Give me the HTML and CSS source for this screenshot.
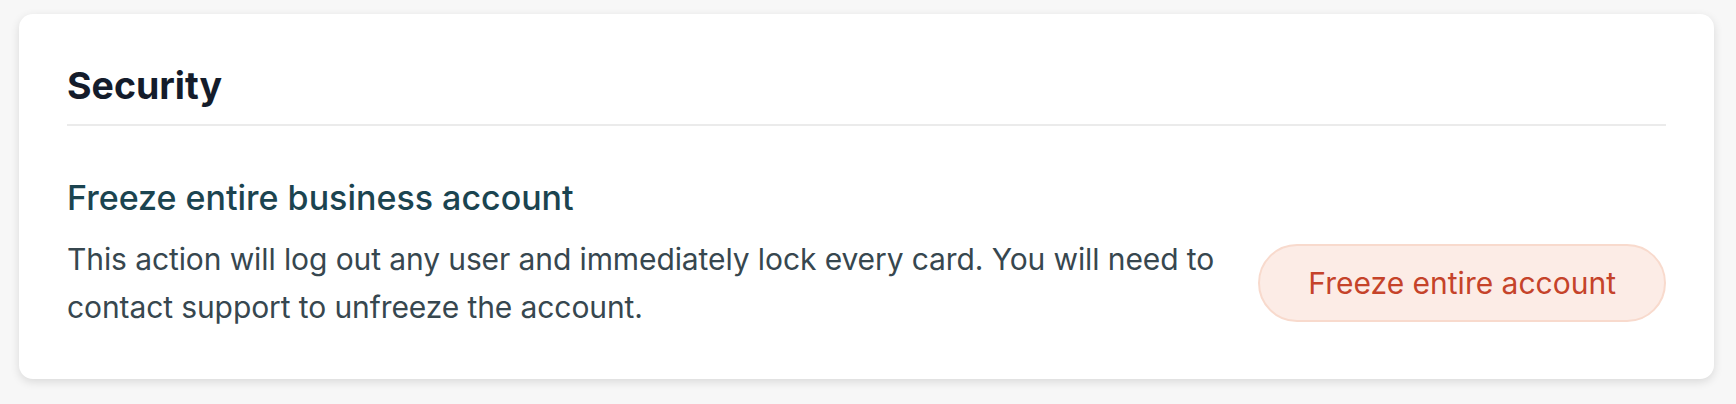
FILE: index.html
```html
<!DOCTYPE html>
<html lang="en">
<head>
    <meta charset="UTF-8">
    <meta name="viewport" content="width=device-width, initial-scale=1.0">
    <title>Security</title>
    <link rel="stylesheet" href="styles.css">
</head>
<body>
    <div class="card">
        <h2 class="card-title">Security</h2>
        <div class="setting">
            <h3 class="setting-title">Freeze entire business account</h3>
            <div class="setting-row">
                <p class="setting-text">This action will log out any user and immediately lock every card. You will need to contact support to unfreeze the account.</p>
                <button class="btn-danger" type="button">Freeze entire account</button>
            </div>
        </div>
    </div>
</body>
</html>
```

FILE: styles.css
```css
body {
    margin: 0;
    padding: 14px 22px 26px 19px;
    background-color: #f7f7f7;
    font-family: Inter, "Noto Sans", sans-serif;
    color: #37474f;
}
.card {
    background-color: #fff;
    border-radius: 14px;
    padding: 48px 48px 48px;
    box-shadow: 0 3px 10px rgba(0, 0, 0, 0.12);
}
.card-title {
    margin: 0;
    padding: 0 0 14px;
    font-size: 37.5px;
    line-height: 48px;
    font-weight: 700;
    color: #141c2b;
    border-bottom: 2px solid #ebebeb;
}
.setting {
    margin-top: 50px;
}
.setting-title {
    margin: 0;
    font-size: 34px;
    line-height: 44px;
    font-weight: 500;
    color: #1b4450;
}
.setting-row {
    display: flex;
    align-items: center;
    gap: 24px;
    margin-top: 15px;
}
.setting-text {
    flex: 1;
    margin: 0;
    font-size: 30px;
    line-height: 48px;
    letter-spacing: -0.1px;
    color: #37474f;
}
.btn-danger {
    flex-shrink: 0;
    padding: 0 48px;
    height: 78px;
    border: 2px solid #f8dacd;
    border-radius: 39px;
    background-color: #fcece6;
    color: #c5432a;
    font-family: inherit;
    font-size: 30px;
    cursor: pointer;
}
```
